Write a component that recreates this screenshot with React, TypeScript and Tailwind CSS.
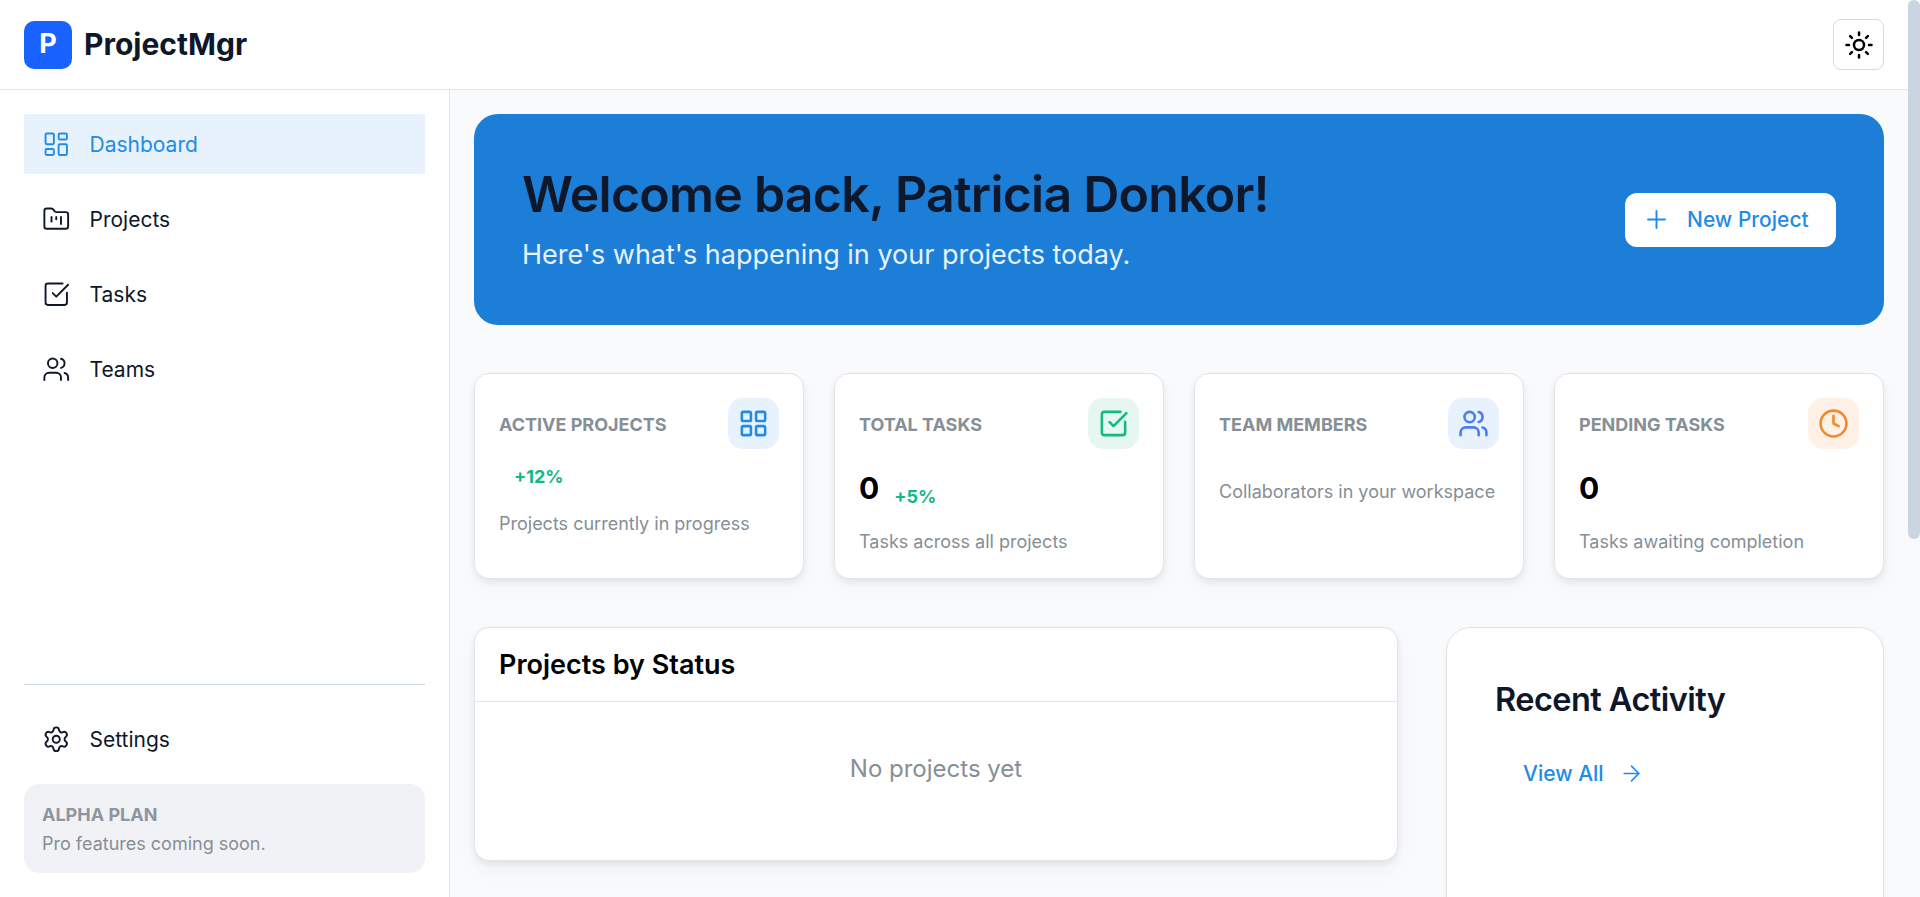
import React from "react";
import { ArrowRight, CheckSquare, Clock, FolderKanban, LayoutDashboard, LayoutGrid, Plus, Settings, Sun, Users } from "lucide-react";

type NavItem = { label: string; icon: React.ComponentType<any>; active?: boolean };

const nav: NavItem[] = [
  { label: "Dashboard", icon: LayoutDashboard, active: true },
  { label: "Projects", icon: FolderKanban },
  { label: "Tasks", icon: CheckSquare },
  { label: "Teams", icon: Users },
];

function NavRow({ label, icon: Icon, active }: NavItem) {
  return (
    <a
      className={
        active
          ? "flex h-[60px] items-center gap-[19px] bg-[#e7f2fc] pl-[18px] text-[21px] text-[#228be6]"
          : "flex h-[60px] items-center gap-[19px] pl-[18px] text-[21px] text-[#0f172a]"
      }
    >
      <Icon size={28.5} strokeWidth={1.6} />
      <span className="pt-[2px]">{label}</span>
    </a>
  );
}

type Stat = {
  label: string;
  icon: React.ComponentType<any>;
  iconClass: string;
  value?: string;
  trend?: string;
  desc: string;
};

const stats: Stat[] = [
  { label: "Active Projects", icon: LayoutGrid, iconClass: "bg-[#e7f2fc] text-[#228be6]", trend: "+12%", desc: "Projects currently in progress" },
  { label: "Total Tasks", icon: CheckSquare, iconClass: "bg-[#e6f7f2] text-[#12b886]", value: "0", trend: "+5%", desc: "Tasks across all projects" },
  { label: "Team Members", icon: Users, iconClass: "bg-[#e7f2fc] text-[#4c7cf0]", desc: "Collaborators in your workspace" },
  { label: "Pending Tasks", icon: Clock, iconClass: "bg-[#fff1e6] text-[#f08a2c]", value: "0", desc: "Tasks awaiting completion" },
];

function StatCard({ label, icon: Icon, iconClass, value, trend, desc }: Stat) {
  return (
    <div className="h-[206px] rounded-[15px] border border-[#e2e4e8] bg-white px-[24px] pt-[24px] shadow-[0_3px_6px_rgba(15,23,42,0.07),0_8px_16px_rgba(15,23,42,0.03)]">
      <div className="flex h-[51px] items-center justify-between">
        <span className="pt-[1px] text-[18px] font-bold uppercase text-[#868e96]">{label}</span>
        <span className={`flex h-[51px] w-[51px] items-center justify-center rounded-[15px] ${iconClass}`}>
          <Icon size={31} strokeWidth={2} />
        </span>
      </div>
      {value ? (
        <div className="mt-[17px] flex items-end">
          <span className="text-[30px] font-bold leading-[45px] text-black">{value}</span>
          {trend && <span className="mb-[1px] ml-[15px] text-[18px] font-bold leading-[26px] text-[#12b886]">{trend}</span>}
        </div>
      ) : trend ? (
        <div className="mt-[15px] flex">
          <span className="ml-[15px] text-[18px] font-bold leading-[26px] text-[#12b886]">{trend}</span>
        </div>
      ) : null}
      <p className={value ? "mt-[18px] text-[18px] leading-[26px] text-[#868e96]" : trend ? "mt-[21px] text-[18px] leading-[26px] text-[#868e96]" : "mt-[30px] text-[18px] leading-[26px] text-[#868e96]"}>{desc}</p>
    </div>
  );
}

export default function App() {
  return (
    <div className="flex h-screen bg-[#f9fafc] font-['Inter',sans-serif]">
      <div className="h-screen min-w-0 flex-1 overflow-y-auto">
        <header className="sticky top-0 z-10 flex h-[90px] items-center justify-between border-b border-[#e2e5e9] bg-white px-[24px]">
          <div className="flex items-center gap-[12px]">
            <div className="flex h-[48px] w-[48px] items-center justify-center rounded-[10px] bg-[#1a62ff] text-[27px] font-bold text-white">P</div>
            <span className="text-[30px] font-bold text-[#0f172a]">ProjectMgr</span>
          </div>
          <button className="flex h-[51px] w-[51px] items-center justify-center rounded-[8px] border border-[#d5dae1] bg-white text-black">
            <Sun size={30} strokeWidth={2} />
          </button>
        </header>
        <div className="flex">
          <aside className="sticky top-[90px] flex h-[807px] w-[450px] shrink-0 flex-col justify-between border-r border-[#e2e5e9] bg-white px-[24px] pb-[24px] pt-[24px]">
            <nav className="flex flex-col gap-[15px]">
              {nav.map((n) => (
                <NavRow key={n.label} {...n} />
              ))}
            </nav>
            <div>
              <div className="mb-[24px] border-t border-[#cbd5e1]" />
              <NavRow label="Settings" icon={Settings} />
              <div className="mt-[15px] flex h-[89px] flex-col justify-center rounded-[15px] bg-[#f1f2f5] px-[18px] pt-[2px]">
                <span className="text-[18px] font-bold leading-[28px] text-[#8e959e]">ALPHA PLAN</span>
                <span className="mt-[1px] text-[18px] leading-[28px] text-[#868e96]">Pro features coming soon.</span>
              </div>
            </div>
          </aside>
          <main className="min-w-0 flex-1 p-[24px]">
            <section className="flex h-[211px] items-center justify-between rounded-[24px] bg-[#1c7ed6] pl-[48px] pr-[48px]">
              <div className="pb-[6px]">
                <h1 className="text-[50px] font-semibold leading-[72px] tracking-[-0.75px] text-[#0f172a]">Welcome back, Patricia Donkor!</h1>
                <p className="mt-[5px] text-[27px] leading-[40px] text-[#e7f2fc]">Here's what's happening in your projects today.</p>
              </div>
              <button className="flex h-[54px] w-[211px] items-center justify-start gap-[16px] rounded-[12px] bg-white pl-[17px] text-[21px] font-medium text-[#228be6]">
                <Plus size={29} strokeWidth={1.6} />
                New Project
              </button>
            </section>
            <section className="mt-[48px] grid grid-cols-4 gap-[30px]">
              {stats.map((s) => (
                <StatCard key={s.label} {...s} />
              ))}
            </section>
            <section className="mt-[48px] grid grid-cols-[924px_438px] gap-[48px]">
              <div className="h-[234px] self-start rounded-[15px] border border-[#e2e4e8] bg-white shadow-[0_3px_6px_rgba(15,23,42,0.07),0_10px_20px_rgba(15,23,42,0.04)]">
                <div className="flex h-[74px] items-center border-b border-[#e4e6ea] px-[24px]">
                  <h2 className="pt-[2px] text-[27px] font-semibold text-black">Projects by Status</h2>
                </div>
                <div className="flex h-[134px] items-center justify-center text-[24px] text-[#868e96]">No projects yet</div>
              </div>
              <div className="h-[842px] rounded-[25px] border border-[#e2e4e8] bg-white px-[48px] pt-[49px] shadow-[0_3px_6px_rgba(15,23,42,0.05)]">
                <h2 className="text-[32.5px] font-semibold leading-[46px] tracking-[-0.55px] text-[#0f172a]">Recent Activity</h2>
                <a className="ml-[28px] mt-[35px] flex items-center gap-[15px] text-[21px] font-medium text-[#228be6]">
                  View All
                  <ArrowRight size={25} strokeWidth={1.6} />
                </a>
              </div>
            </section>
          </main>
        </div>
      </div>
      <div className="w-[12px] shrink-0">
        <div className="h-[539px] rounded-[6px] bg-[#cbd5e1]" />
      </div>
    </div>
  );
}
